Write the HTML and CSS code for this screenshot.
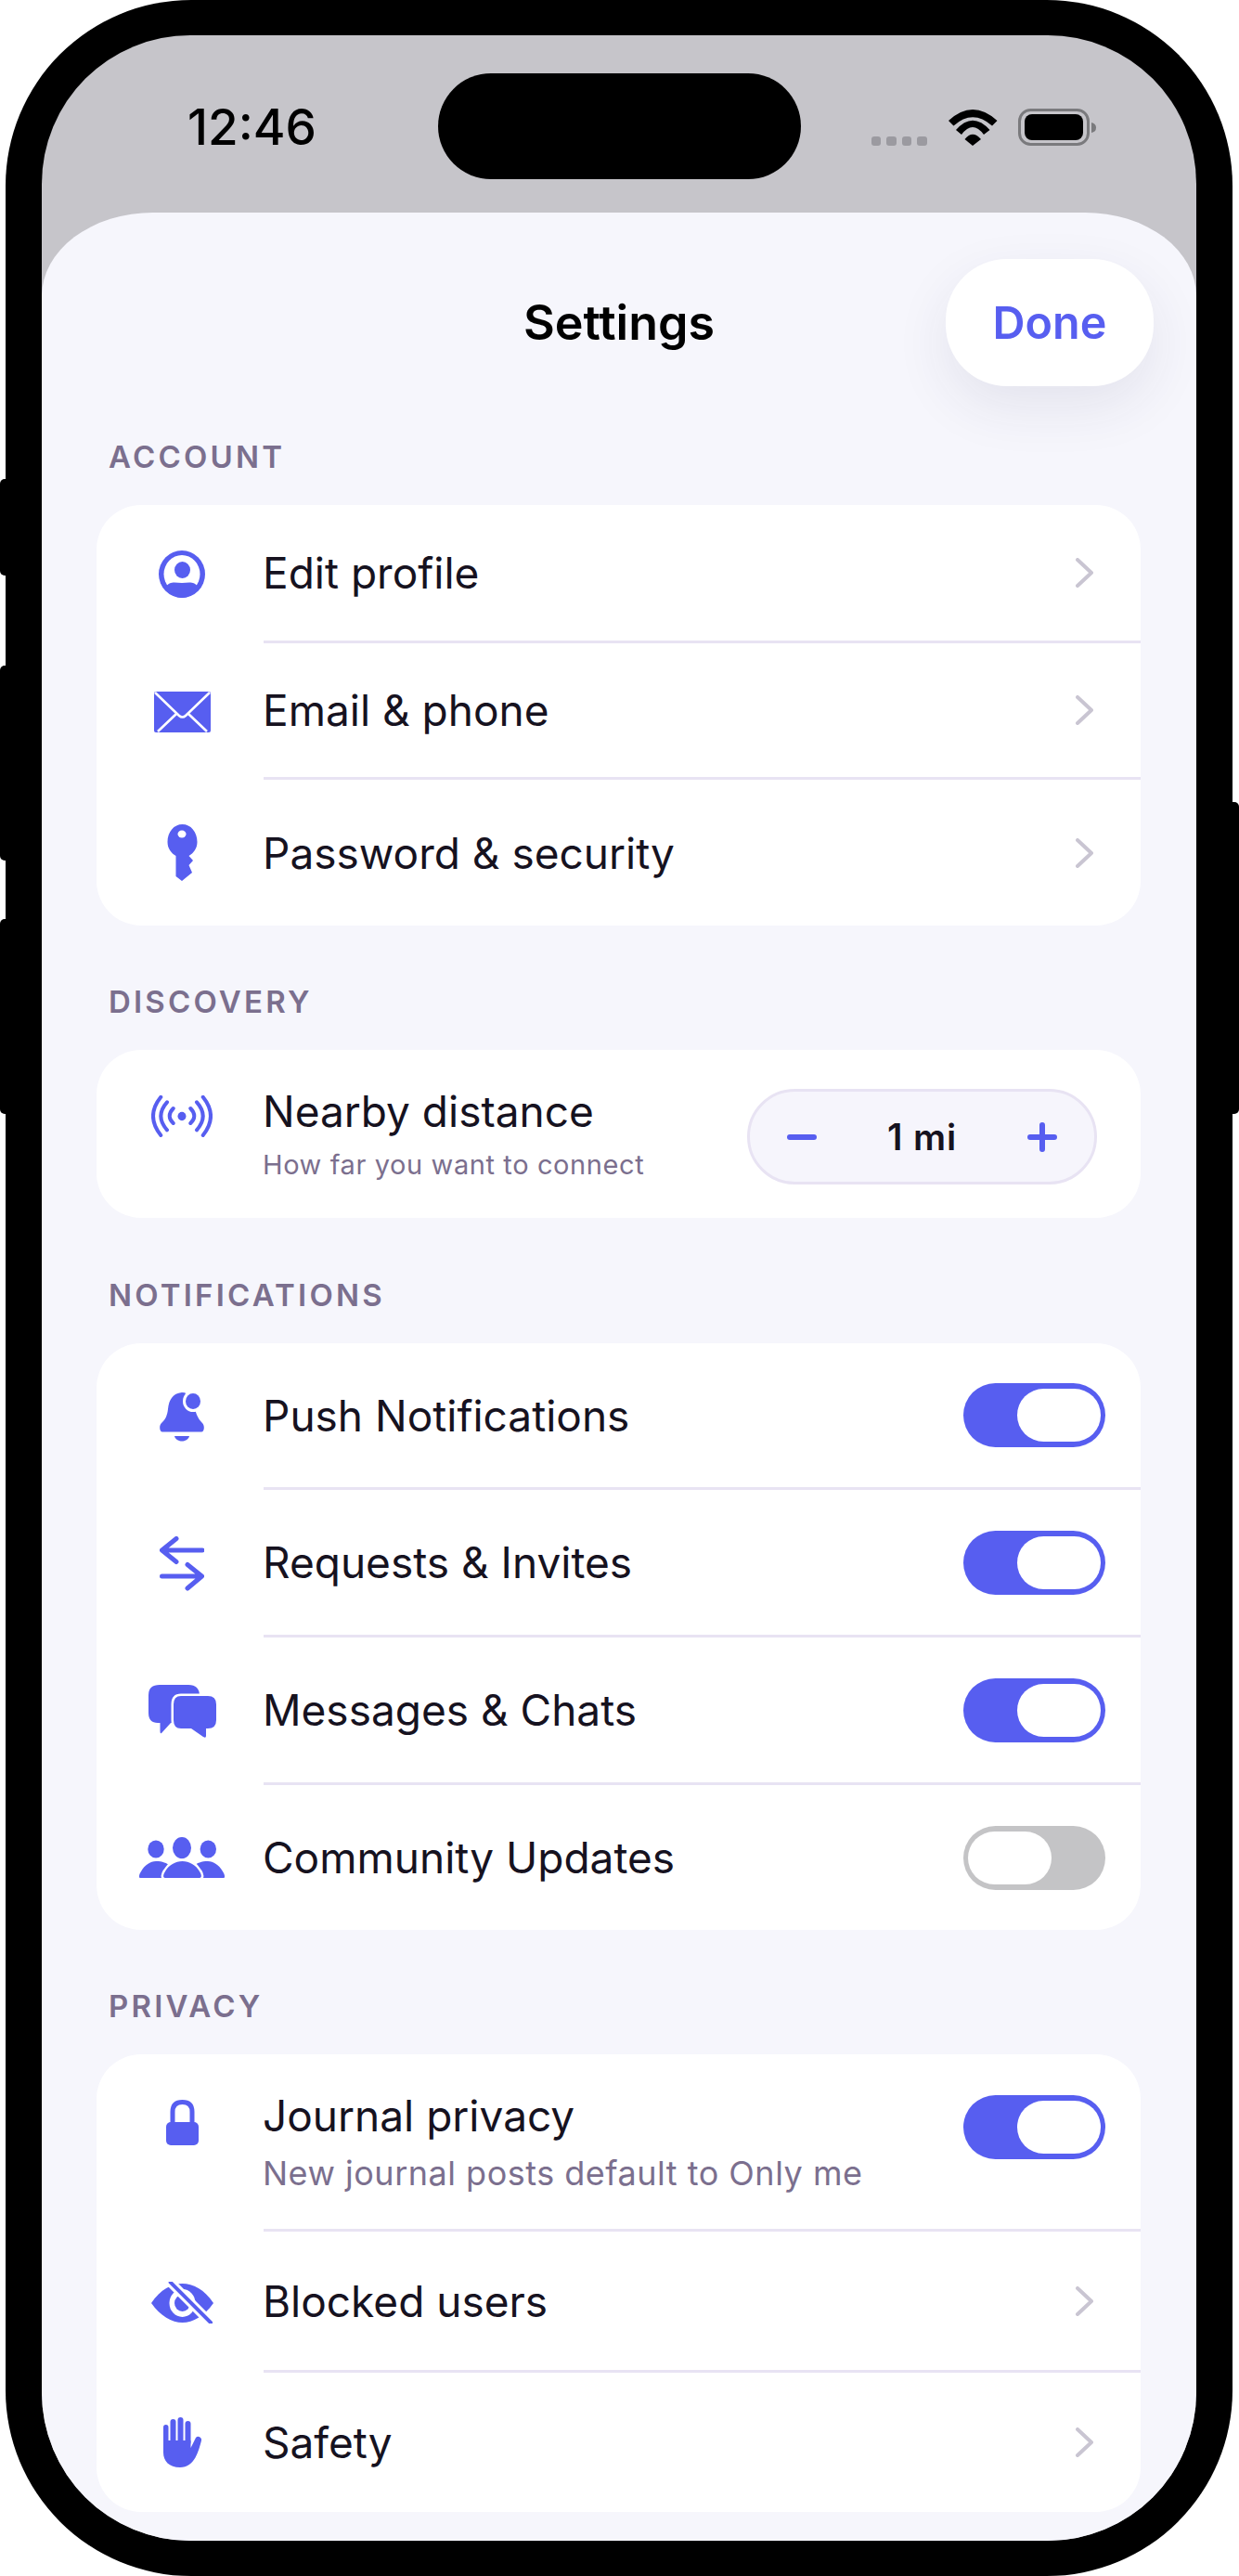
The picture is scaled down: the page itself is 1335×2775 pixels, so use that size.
FILE: index.html
```html
<!DOCTYPE html>
<html lang="en">
<head>
  <meta charset="UTF-8" />
  <meta name="viewport" content="width=device-width, initial-scale=1.0" />
  <title>Settings</title>
  <link rel="stylesheet" href="styles.css">
</head>
<body>
  <div class="phone">
    <span class="side-btn btn-mute"></span>
    <span class="side-btn btn-up"></span>
    <span class="side-btn btn-down"></span>
    <span class="side-btn btn-power"></span>

    <div class="screen">
      <div class="status-bar">
        <div class="time">12:46</div>
        <div class="island"></div>
        <div class="status-icons">
          <span class="signal"><i></i><i></i><i></i><i></i></span>
          <svg class="wifi" width="53" height="39" viewBox="0 0 53 39">
            <path d="M0 12Q26-12 52.5 12L47 17.5Q26-1 5.5 17.5Z"/>
            <path d="M8 22Q26 1.4 44.5 22L38 27Q26 11 14 27Z"/>
            <path d="M17.5 32Q26 21.5 35 32L26 39Z"/>
          </svg>
          <svg class="battery" width="85" height="40" viewBox="0 0 85 40">
            <rect x="1.5" y="1.5" width="74" height="37" rx="12" fill="none" stroke="#7a7a7d" stroke-width="3"/>
            <rect x="7" y="6" width="63" height="28" rx="8" fill="#000"/>
            <path d="M79 15Q84 16 84 20.5Q84 25 79 26Z" fill="#7a7a7d"/>
          </svg>
        </div>
      </div>

      <div class="sheet">
        <div class="nav">
          <h1 class="nav-title">Settings</h1>
          <button class="done-btn">Done</button>
        </div>

        <!-- account -->
        <section class="section">
          <h2 class="section-label">ACCOUNT</h2>
          <div class="card">
            <div class="row row-a1">
              <div class="icon-cell">
                <svg width="50" height="51" viewBox="0 0 50 51">
                  <ellipse class="fill" cx="25" cy="25.5" rx="25" ry="25.5"/>
                  <ellipse cx="25" cy="25.5" rx="19.5" ry="20.5" fill="#fff"/>
                  <ellipse class="fill" cx="25.5" cy="21" rx="8.5" ry="9"/>
                  <path class="fill" d="M7 40C12 32 19 35 25 35C31 35 38 32 43 40C38 47 32 51 25 51C18 51 12 47 7 40Z"/>
                </svg>
              </div>
              <div class="row-body">
                <span class="row-title">Edit profile</span>
                <svg class="chevron" width="19" height="32" viewBox="0 0 19 32"><path d="M2 2L17 16L2 30"/></svg>
              </div>
            </div>
            <div class="row row-a2">
              <div class="icon-cell">
                <svg width="61" height="44" viewBox="0 0 61 44">
                  <rect class="fill" width="61" height="44" rx="2"/>
                  <path d="M1 1L27 26Q30.5 29 34 26L60 1M4 43L24 24M57 43L37 24" fill="none" stroke="#fff" stroke-width="2.6"/>
                </svg>
              </div>
              <div class="row-body">
                <span class="row-title">Email &amp; phone</span>
                <svg class="chevron" width="19" height="32" viewBox="0 0 19 32"><path d="M2 2L17 16L2 30"/></svg>
              </div>
            </div>
            <div class="row row-a3 last">
              <div class="icon-cell">
                <svg width="33" height="61" viewBox="0 0 33 61">
                  <path class="fill" d="M16.5 0C25.5 0 32.5 8 32.5 19C32.5 26 28.500 31 23.500 34L28 39L23.500 44L27 52L16 61L9.500 56V34C4.500 31 .5 26 .5 19C.5 8 7.500 0 16.500 0Z"/>
                  <ellipse cx="16" cy="10.500" rx="4.500" ry="4" fill="#fff"/>
                </svg>
              </div>
              <div class="row-body">
                <span class="row-title">Password &amp; security</span>
                <svg class="chevron" width="19" height="32" viewBox="0 0 19 32"><path d="M2 2L17 16L2 30"/></svg>
              </div>
            </div>
          </div>
        </section>

        <!-- discovery -->
        <section class="section">
          <h2 class="section-label">DISCOVERY</h2>
          <div class="card">
            <div class="row row-distance last">
              <div class="icon-cell icon-distance">
                <svg class="arcs" width="66" height="45" viewBox="0 0 66 45">
                  <ellipse class="fill" cx="33" cy="22.500" rx="4.500" ry="4.700"/>
                  <path d="M23.700 14Q15.700 22.300 23.700 30M17 7.300Q3.600 22.300 17 37.300M10.300 1.700Q-6.300 22.300 10.300 43M42.300 14Q50.300 22.300 42.300 30M49 7.300Q62.400 22.300 49 37.300M55.700 1.700Q72.300 22.300 55.700 43"/>
                </svg>
              </div>
              <div class="row-body">
                <div class="row-text">
                  <div class="row-title">Nearby distance</div>
                  <div class="row-sub small">How far you want to connect</div>
                </div>
                <div class="stepper">
                  <svg class="step-icon" width="32" height="32" viewBox="0 0 32 32"><path d="M3 16H29"/></svg>
                  <span class="step-value">1 mi</span>
                  <svg class="step-icon" width="32" height="32" viewBox="0 0 32 32"><path d="M3 16H29M16 3V29"/></svg>
                </div>
              </div>
            </div>
          </div>
        </section>

        <!-- notifications -->
        <section class="section section-notif">
          <h2 class="section-label">NOTIFICATIONS</h2>
          <div class="card">
            <div class="row row-n1">
              <div class="icon-cell">
                <svg width="48" height="53" viewBox="0 0 48 53">
                  <path class="fill" d="M24 0C14 1 10 8 9 18C8 26 6 29 2 33C-1 36 0 42.600 3 42.600H45C48 42.600 49 36 46 33C42 29 39 24 38 16C37 8 32 0 24 0Z"/>
                  <path class="fill" d="M16 47H32C31 51 27 52.500 24 52.500C21 52.500 17 51 16 47Z"/>
                  <ellipse cx="36" cy="9.500" rx="11" ry="11.500" fill="#fff"/>
                  <ellipse class="fill" cx="36" cy="9.500" rx="8" ry="8.500"/>
                </svg>
              </div>
              <div class="row-body">
                <span class="row-title">Push Notifications</span>
                <div class="toggle on"><span class="thumb"></span></div>
              </div>
            </div>
            <div class="row row-n2">
              <div class="icon-cell">
                <svg class="arrows" width="48" height="59" viewBox="0 0 48 59">
                  <path d="M46 15H3M18 2.500L2.500 15L18 27.500M2.500 43H45M30 30.500L45.500 43L30 56"/>
                </svg>
              </div>
              <div class="row-body">
                <span class="row-title">Requests &amp; Invites</span>
                <div class="toggle on"><span class="thumb"></span></div>
              </div>
            </div>
            <div class="row row-n2">
              <div class="icon-cell">
                <svg width="73" height="58" viewBox="0 0 73 58">
                  <path class="fill" d="M12 0H43Q55 0 55 12V41H24L14 52Q12.500 53 12.500 50V41H10Q0 41 0 30V11Q0 0 12 0Z"/>
                  <path class="fill halo" d="M35 12H64Q73 12 73 21V38Q73 47 64 47H62V55Q62 58 59 56L46 47H35Q27 47 27 38V21Q27 12 35 12Z"/>
                </svg>
              </div>
              <div class="row-body">
                <span class="row-title">Messages &amp; Chats</span>
                <div class="toggle on"><span class="thumb"></span></div>
              </div>
            </div>
            <div class="row row-n4 last">
              <div class="icon-cell">
                <svg width="92" height="44" viewBox="0 0 92 44">
                  <ellipse class="fill" cx="18" cy="13" rx="8.700" ry="9.500"/>
                  <ellipse class="fill" cx="74.300" cy="13" rx="8.700" ry="9.500"/>
                  <ellipse class="fill" cx="46" cy="11.600" rx="10" ry="11.600"/>
                  <path class="fill" d="M1 44C-1 44 0 40 2 37C6 30 12 26 18 26C25 26 30 28 33 31L24 44Z"/>
                  <path class="fill" d="M91 44C93 44 92 40 90 37C86 30 80 26 74 26C67 26 62 28 59 31L68 44Z"/>
                  <path class="fill halo" d="M28 44C25 44 26 40 28 37C32 30 39 26 46.500 26C54 26 61 30 65 37C67 40 68 44 65 44Z"/>
                </svg>
              </div>
              <div class="row-body">
                <span class="row-title">Community Updates</span>
                <div class="toggle off"><span class="thumb"></span></div>
              </div>
            </div>
          </div>
        </section>

        <!-- privacy -->
        <section class="section">
          <h2 class="section-label">PRIVACY</h2>
          <div class="card">
            <div class="row row-journal">
              <div class="icon-cell icon-journal">
                <svg width="35" height="49" viewBox="0 0 35 49">
                  <path d="M7 26V13Q7 2.500 17.500 2.500Q28 2.500 28 13V26" fill="none" stroke="#575ef0" stroke-width="5"/>
                  <rect class="fill" y="24" width="35" height="25" rx="5"/>
                </svg>
              </div>
              <div class="row-body">
                <div class="row-text">
                  <div class="row-title">Journal privacy</div>
                  <div class="row-sub">New journal posts default to Only me</div>
                </div>
                <div class="toggle on toggle-journal"><span class="thumb"></span></div>
              </div>
            </div>
            <div class="row row-p2">
              <div class="icon-cell">
                <svg width="67" height="45" viewBox="0 0 67 45">
                  <path class="fill" d="M0 23C10 8 22 2 33.500 2C45 2 57 8 67 23C57 37 45 44 33.500 44C22 44 10 37 0 23Z"/>
                  <ellipse cx="33.500" cy="23" rx="14" ry="15" fill="#fff"/>
                  <ellipse class="fill" cx="33.500" cy="23" rx="8.500" ry="9"/>
                  <path d="M20.700 .7L64 44" stroke="#fff" stroke-width="10"/>
                  <path d="M20.700 .7L64 44" stroke="#575ef0" stroke-width="4" stroke-linecap="round"/>
                </svg>
              </div>
              <div class="row-body">
                <span class="row-title">Blocked users</span>
                <svg class="chevron" width="19" height="32" viewBox="0 0 19 32"><path d="M2 2L17 16L2 30"/></svg>
              </div>
            </div>
            <div class="row row-p3 last">
              <div class="icon-cell">
                <svg width="41" height="54" viewBox="0 0 41 54">
                  <rect class="fill" y="8" width="5.500" height="22" rx="2.700"/>
                  <rect class="fill" x="7.500" y="2" width="6" height="28" rx="3"/>
                  <rect class="fill" x="15.500" width="6" height="30" rx="3"/>
                  <rect class="fill" x="23.500" y="4" width="6" height="26" rx="3"/>
                  <path class="fill" d="M0 25H29.500V33L35 22Q37 20 39.500 21.500Q41.500 23 41 25C38 36 34 54 18 54C6 54 0 47 0 38Z"/>
                </svg>
              </div>
              <div class="row-body">
                <span class="row-title">Safety</span>
                <svg class="chevron" width="19" height="32" viewBox="0 0 19 32"><path d="M2 2L17 16L2 30"/></svg>
              </div>
            </div>
          </div>
        </section>
      </div>
    </div>
  </div>
</body>
</html>
```

FILE: styles.css
```css
* {
  box-sizing: border-box;
}

body {
  margin: 0;
  background-color: #fff;
  font-family: Inter, "Liberation Sans", sans-serif;
  color: #16121f;
}

.phone {
  position: relative;
  width: 1322px;
  height: 2775px;
  margin-left: 6px;
  padding: 38px 39px 0;
  background-color: #000;
  border-radius: 200px;
}

.side-btn {
  position: absolute;
  width: 8px;
  background-color: #000;
}

.btn-mute {
  left: -6px;
  top: 516px;
  height: 104px;
  border-radius: 5px 0 0 5px;
}

.btn-up {
  left: -6px;
  top: 717px;
  height: 210px;
  border-radius: 5px 0 0 5px;
}

.btn-down {
  left: -6px;
  top: 990px;
  height: 210px;
  border-radius: 5px 0 0 5px;
}

.btn-power {
  right: -7px;
  top: 864px;
  height: 336px;
  border-radius: 0 5px 5px 0;
}

.screen {
  display: flex;
  flex-direction: column;
  height: 2698.5px;
  overflow: hidden;
  background-color: #c6c5ca;
  border-radius: 160px;
}

/* status bar */
.status-bar {
  display: grid;
  grid-template-columns: 1fr 391px 1fr;
  flex: none;
  height: 191px;
  padding-top: 41px;
}

.time {
  height: 114px;
  padding-left: 157px;
  font-size: 53px;
  font-weight: 500;
  line-height: 117px;
  color: #000;
}

.island {
  height: 114px;
  background-color: #000;
  border-radius: 57px;
}

.status-icons {
  display: flex;
  align-items: flex-end;
  height: 78px;
  padding-left: 76px;
}

.signal {
  display: flex;
  gap: 6px;
}

.signal i {
  width: 10.6px;
  height: 10px;
  background-color: #9b9aa0;
  border-radius: 3px;
}

.wifi {
  margin-left: 23px;
}

.battery {
  margin-left: 22px;
  margin-bottom: 0;
}

/* sheet */
.sheet {
  flex: 1;
  background-color: #f6f6fc;
  border-radius: 120px 120px 0 0 / 90px 90px 0 0;
}

.nav {
  display: grid;
  grid-template-columns: 1fr auto 1fr;
  align-items: center;
  height: 137px;
  margin-top: 50px;
  padding: 0 46px;
}

.nav-title {
  grid-column: 2;
  margin: 0;
  font-size: 52px;
  font-weight: 600;
  color: #000;
}

.done-btn {
  grid-column: 3;
  justify-self: end;
  width: 224px;
  height: 137px;
  padding: 0;
  border: none;
  border-radius: 66px;
  background-color: #fff;
  box-shadow: 0 22px 60px rgba(40, 40, 90, 0.09);
  font-family: inherit;
  font-size: 48.500px;
  font-weight: 600;
  color: #575ef0;
}

.section {
  margin: 0 60px 0 59px;
  padding-top: 62px;
}

.nav + .section {
  padding-top: 56px;
}

.section-notif {
  padding-top: 63px;
}

.section-label {
  margin: 0 0 32px 13px;
  font-size: 33px;
  font-weight: 600;
  line-height: 40px;
  letter-spacing: 3.200px;
  color: #7b6f8e;
}

.card {
  background-color: #fff;
  border-radius: 48px;
}

.row {
  display: flex;
  align-items: center;
}

.row-a1 {
  height: 149px;
}

.row-a2 {
  height: 147px;
}

.row-a3 {
  height: 157px;
}

.row-distance {
  height: 181px;
}

.row-n1 {
  height: 158px;
}

.row-n2 {
  height: 159px;
}

.row-n4 {
  height: 156px;
}

.row-journal {
  height: 191px;
}

.row-p2 {
  height: 152px;
}

.row-p3 {
  height: 150px;
}

.icon-cell {
  display: flex;
  flex: none;
  align-items: center;
  justify-content: center;
  width: 180px;
  padding-left: 4px;
}

.icon-cell svg {
  display: block;
}

.icon-distance {
  align-self: flex-start;
  padding-top: 49px;
}

.icon-journal {
  align-self: flex-start;
  padding-top: 49px;
}

.fill {
  fill: #575ef0;
}

.halo {
  stroke: #fff;
  stroke-width: 5px;
  paint-order: stroke;
}

.arcs path,
.arrows path {
  fill: none;
  stroke: #575ef0;
  stroke-linecap: round;
  stroke-linejoin: round;
}

.arcs path {
  stroke-width: 4px;
}

.arrows path {
  stroke-width: 5px;
}

.row-body {
  display: flex;
  flex: 1;
  align-items: center;
  justify-content: space-between;
  align-self: stretch;
  padding-right: 51px;
  border-bottom: 3px solid #e8e3f3;
}

.last .row-body {
  border-bottom: none;
}

.row-title {
  margin-left: -1px;
  font-size: 46px;
  font-weight: 420;
  line-height: 50px;
}

.row-sub {
  margin-top: 17px;
  margin-left: -1px;
  font-size: 36px;
  line-height: 40px;
  letter-spacing: 0.500px;
  color: #7b6f8e;
}

.row-sub.small {
  margin-top: 13px;
  font-size: 29px;
  letter-spacing: 0.600px;
}

.row-text {
  align-self: flex-start;
  padding-top: 41px;
}

.chevron path {
  fill: none;
  stroke: #c9c5d2;
  stroke-width: 4px;
  stroke-linecap: round;
  stroke-linejoin: round;
}

.row-distance .row-body {
  padding-right: 47px;
}

.stepper {
  display: flex;
  align-items: center;
  justify-content: space-between;
  width: 377px;
  height: 103px;
  margin-top: 6px;
  padding: 0 40px;
  background-color: #f6f5fc;
  border: 3px solid #e8e3f3;
  border-radius: 52px;
}

.step-icon path {
  fill: none;
  stroke: #575ef0;
  stroke-width: 6px;
  stroke-linecap: round;
}

.step-value {
  font-size: 39px;
  font-weight: 600;
  letter-spacing: 0.800px;
}

.toggle {
  display: flex;
  flex: none;
  align-items: center;
  width: 153px;
  height: 69px;
  margin-right: -13px;
  padding: 0 5px;
  border-radius: 35px;
}

.toggle.on {
  justify-content: flex-end;
  background-color: #575ef0;
}

.toggle.off {
  justify-content: flex-start;
  background-color: #c4c4c6;
}

.thumb {
  width: 90px;
  height: 57px;
  background-color: #fff;
  border-radius: 29px;
}

.toggle-journal {
  align-self: flex-start;
  margin-top: 44px;
}
```
